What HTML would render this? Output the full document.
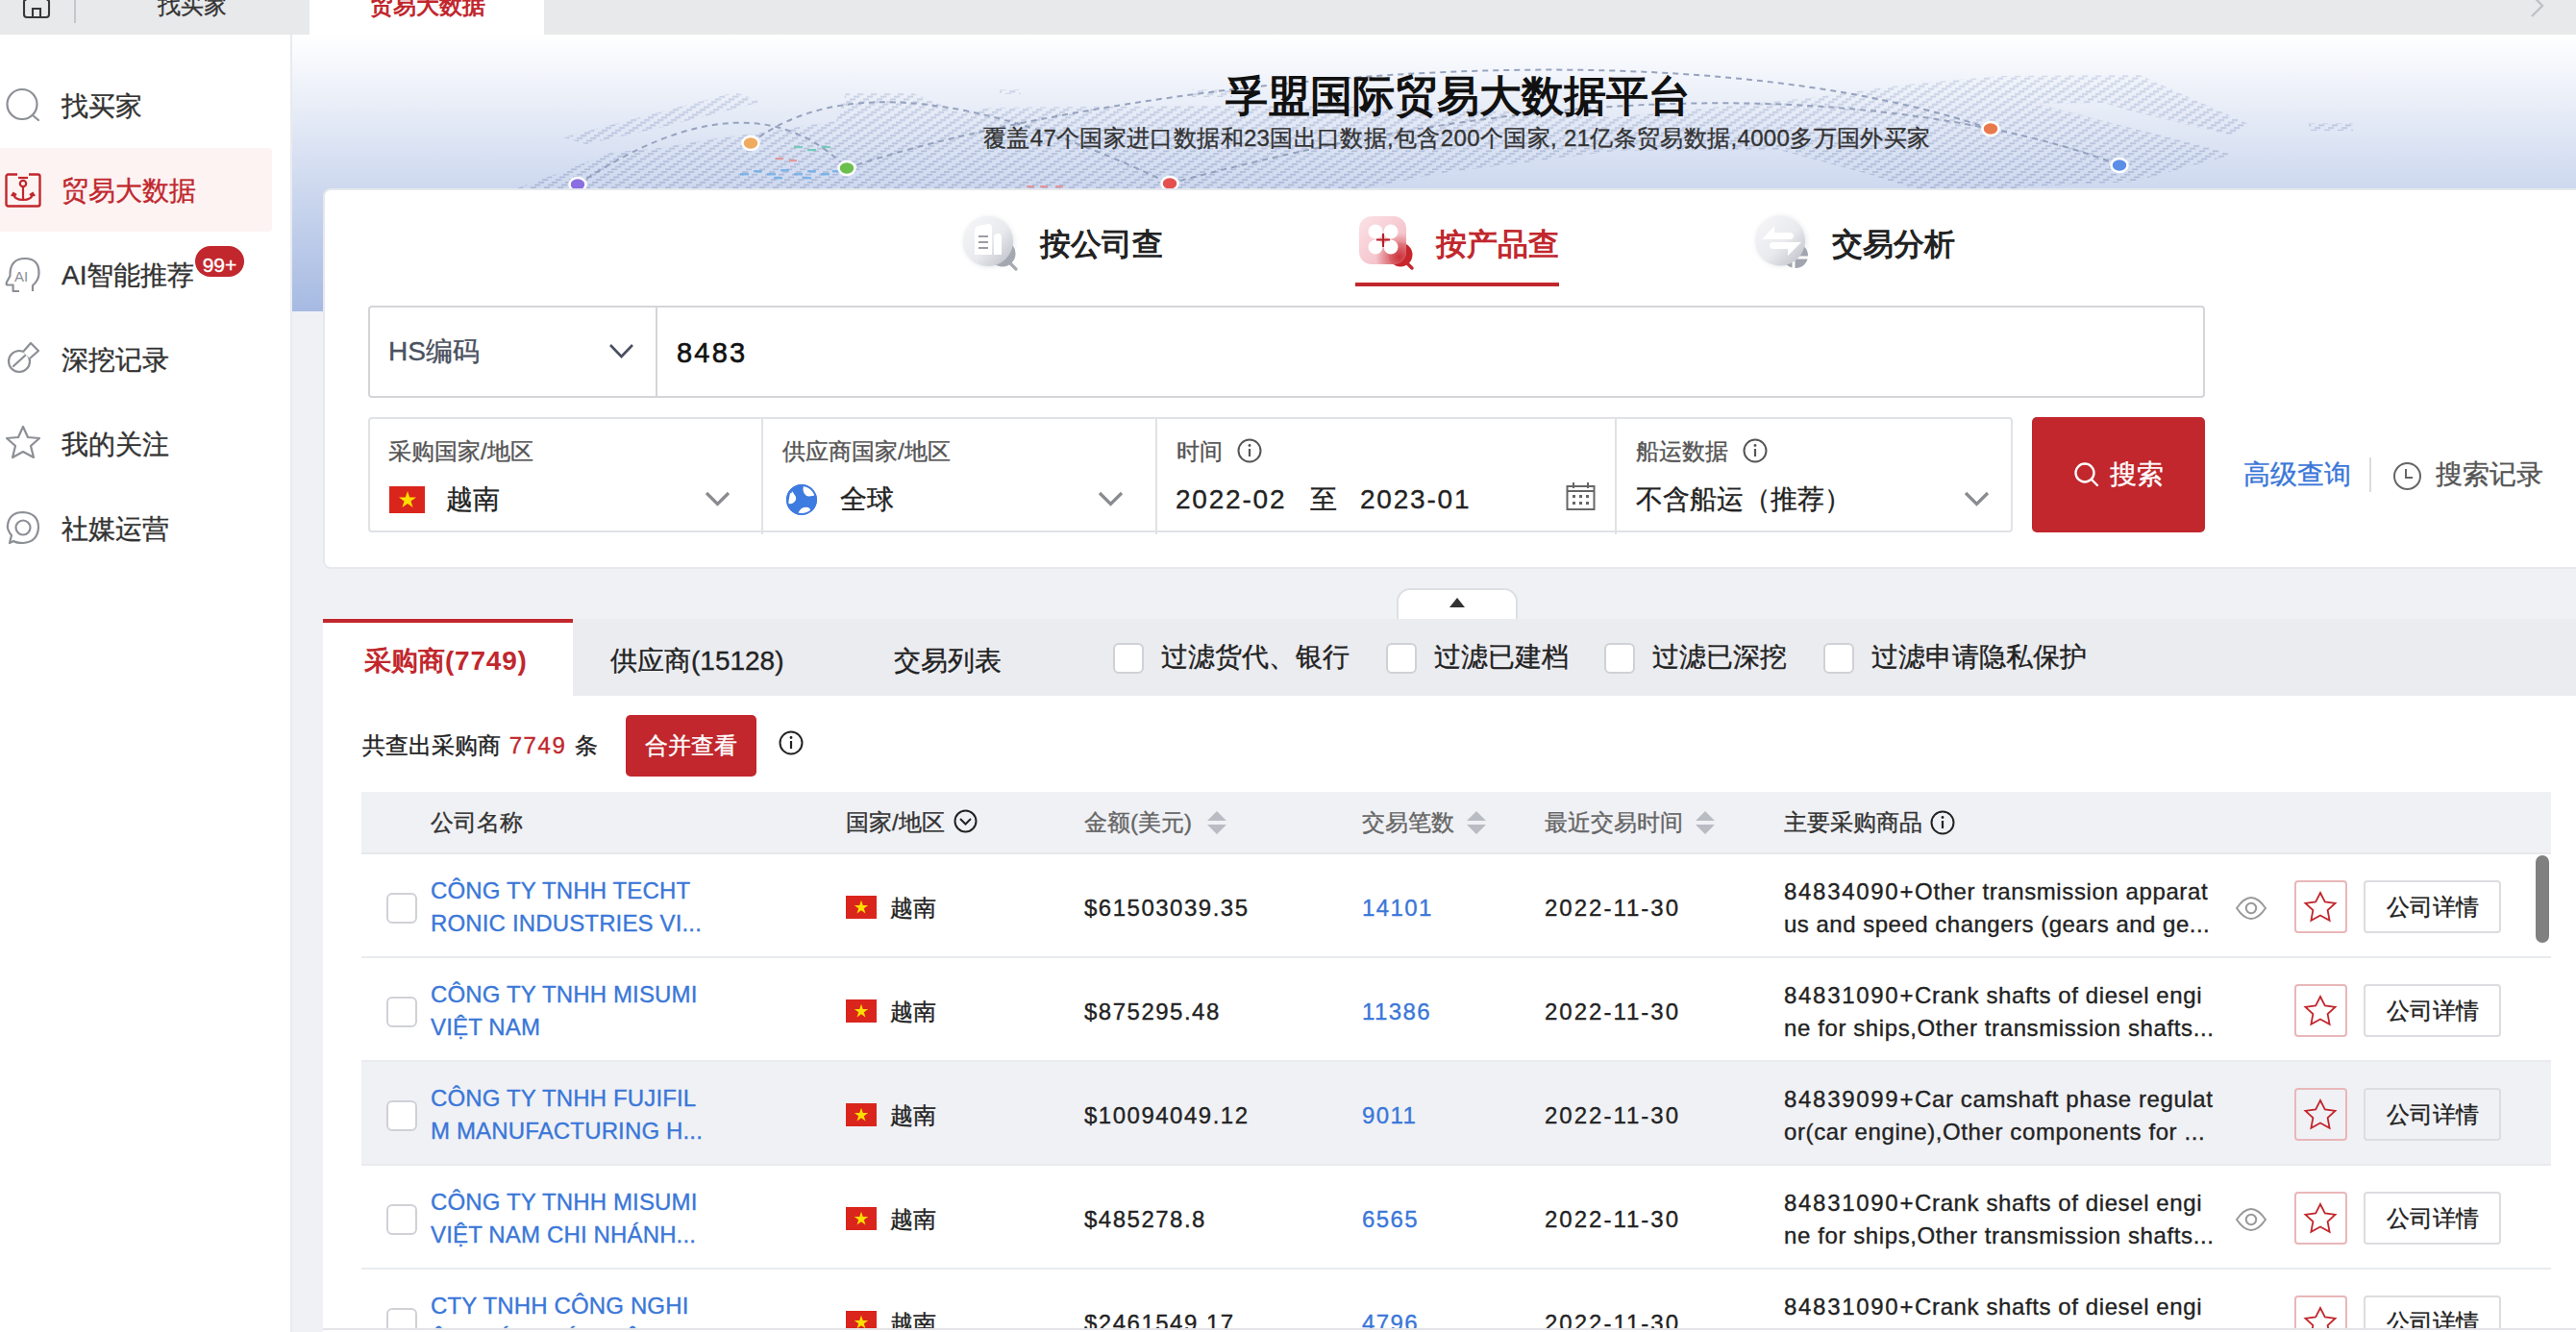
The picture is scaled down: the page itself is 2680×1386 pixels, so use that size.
<!DOCTYPE html>
<html><head><meta charset="utf-8">
<style>
*{box-sizing:border-box;margin:0;padding:0}
html,body{width:2680px;height:1386px;overflow:hidden}
body{-webkit-text-stroke:0.35px currentColor;position:relative;background:#f0f1f5;font-family:"Liberation Sans",sans-serif;color:#222}
.a{position:absolute}
.nw{white-space:nowrap}
#topbar{left:0;top:0;width:2680px;height:36px;background:#e8e9eb;z-index:2}
#sidebar{left:0;top:36px;width:304px;height:1350px;background:#fff;border-right:2px solid #e8eaee}
.nav{position:absolute;left:0;width:283px;height:87px}
.nav .t{position:absolute;left:64px;top:1px;line-height:87px;font-size:28px;color:#333;white-space:nowrap}
.nav svg{position:absolute;left:5px;top:25px}
#banner{left:304px;top:36px;width:2376px;height:288px;background:linear-gradient(#ffffff,#a6bae2);overflow:hidden}
#card{left:336px;top:196px;width:2360px;height:396px;background:#fff;border:2px solid #e6e8ee;border-radius:8px}
.red{color:#c1272d}
.blue{color:#3a77d8}
.lbl{font-size:24px;color:#555;line-height:30px}
.val{font-size:28px;color:#222;line-height:34px}
#results{left:336px;top:644px;width:2344px;height:738px;overflow:hidden;background:#fff}
#tabbar{left:0;top:0;width:2344px;height:80px;background:#ebecf0}
.cb{position:absolute;width:32px;height:32px;border:2px solid #cfd1d6;border-radius:6px;background:#fff}
.th{font-size:24px;color:#333;line-height:30px;top:17px}
.row{position:absolute;left:40px;width:2278px;height:108px;border-bottom:2px solid #e9ebef}
.row .cb{left:26px;top:40px}
.cn{position:absolute;left:72px;top:21px;letter-spacing:0.15px;font-size:24px;line-height:34px;color:#3a77d8;white-space:nowrap}
.flag{position:absolute;left:504px;top:43px;width:32px;height:24px;background:#da251d}
.flag svg{position:absolute;left:8px;top:4px}
.cty{position:absolute;top:39px !important;left:550px;top:37px;font-size:24px;line-height:34px}
.amt{position:absolute;top:39px !important;left:752px;top:37px;font-size:24px;line-height:34px;letter-spacing:1.5px}
.num{position:absolute;top:39px !important;left:1041px;top:37px;font-size:24px;line-height:34px;letter-spacing:1.4px;color:#3a77d8}
.dt{position:absolute;top:39px !important;left:1231px;top:37px;font-size:24px;line-height:34px;letter-spacing:2px}
.prod{position:absolute;left:1480px;top:22px;font-size:24px;line-height:34px;letter-spacing:0.6px;white-space:nowrap;color:#222}
.eye{position:absolute;left:1949px;top:42px}
.star{position:absolute;left:2011px;top:27px;width:55px;height:55px;border:2px solid #e9b7b9;border-radius:4px}
.star svg{position:absolute;left:7px;top:8px}
.det{position:absolute;left:2083px;top:27px;width:143px;height:55px;border:2px solid #dcdde0;border-radius:4px;font-size:24px;line-height:51px;text-align:center;color:#222}
</style></head><body>

<!-- top bar -->
<div id="topbar" class="a">
  <svg class="a" style="left:22px;top:-12px" width="32" height="32" viewBox="0 0 32 32"><path d="M3 13 L16 3 L29 13 V27 Q29 30 26 30 H6 Q3 30 3 27 Z" fill="none" stroke="#38383a" stroke-width="2.1" stroke-linejoin="round"/><path d="M12 30 V21 H20 V30" fill="none" stroke="#38383a" stroke-width="2.1"/></svg>
  <div class="a" style="left:77px;top:0;width:2px;height:24px;background:#c5c6c9"></div>
  <div class="a nw" style="left:164px;top:-9px;font-size:24px;line-height:30px;color:#333">找买家</div>
  <div class="a" style="left:322px;top:0;width:244px;height:36px;background:#fff"></div>
  <div class="a nw red" style="left:385px;top:-9px;font-size:24px;line-height:30px;font-weight:bold;-webkit-text-stroke:0">贸易大数据</div>
  <svg class="a" style="left:2630px;top:-6px" width="20" height="26" viewBox="0 0 20 26"><path d="M4 0.5 L15 12 L4 23" fill="none" stroke="#c0c1c4" stroke-width="2.4"/></svg>
</div>

<!-- sidebar -->
<div id="sidebar" class="a">
  <div class="nav" style="top:30px"><svg width="38" height="38" viewBox="0 0 38 38" style="top:25px;left:5px"><circle cx="18" cy="17.5" r="15.5" fill="none" stroke="#8c8f95" stroke-width="2.2"/><path d="M29 29 L35 34" stroke="#8c8f95" stroke-width="2.2" stroke-linecap="round"/></svg><span class="t">找买家</span></div>
  <div class="nav" style="top:118px;background:#fdf3f3;border-radius:0 4px 4px 0"><svg width="38" height="38" viewBox="0 0 38 38" style="top:26px;left:5px"><rect x="1.5" y="1.5" width="35" height="33" rx="2" fill="none" stroke="#c1272d" stroke-width="2.4"/><path d="M13 1.5 H25" stroke="#fdf3f3" stroke-width="3"/><path d="M14 5 H24" stroke="#c1272d" stroke-width="2.2"/><circle cx="19" cy="11" r="3.2" fill="none" stroke="#c1272d" stroke-width="2.2"/><path d="M19 14 V28 M9 22 Q10 28 19 28 Q28 28 29 22 M7 24 L9 21 L12 23 M31 24 L29 21 L26 23" fill="none" stroke="#c1272d" stroke-width="2.2"/></svg><span class="t" style="color:#c1272d">贸易大数据</span></div>
  <div class="nav" style="top:206px"><svg width="40" height="40" viewBox="0 0 40 40" style="top:23px;left:4px"><path d="M16 38 H9.6 V31.5 H3.5 Q2 31 3 28.5 L6.5 22 Q6 4 22 4 Q37 4 36.5 20 Q36 27 30 32 V38" fill="none" stroke="#8c8f95" stroke-width="2.2" stroke-linejoin="round"/><text x="11" y="27.5" font-size="15" font-family="Liberation Sans" fill="#8c8f95" style="-webkit-text-stroke:0">AI</text></svg><span class="t">AI智能推荐</span>
    <div class="a nw" style="left:203px;top:14px;width:51px;height:32px;border-radius:16px;background:#c1272d;color:#fff;font-size:21px;line-height:40px;text-align:center;overflow:hidden">99+</div></div>
  <div class="nav" style="top:294px"><svg width="40" height="40" viewBox="0 0 40 40" style="top:22px;left:4px"><circle cx="16" cy="24" r="11" fill="none" stroke="#8c8f95" stroke-width="2.2"/><path d="M20 14 L28 5 L36 13 L27 21" fill="#fff" stroke="#8c8f95" stroke-width="2.2" stroke-linejoin="round"/><path d="M10 29 L22 18" stroke="#8c8f95" stroke-width="2.2" stroke-linecap="round"/></svg><span class="t">深挖记录</span></div>
  <div class="nav" style="top:382px"><svg width="40" height="40" viewBox="0 0 40 40" style="top:23px;left:4px"><path d="M20 3 L25 14 L37 15 L28 23 L31 35 L20 29 L9 35 L12 23 L3 15 L15 14 Z" fill="none" stroke="#8c8f95" stroke-width="2.2" stroke-linejoin="round"/></svg><span class="t">我的关注</span></div>
  <div class="nav" style="top:470px"><svg width="40" height="40" viewBox="0 0 40 40" style="top:23px;left:4px"><path d="M6 36 L8 28 Q3 22 4 17 Q6 4 20 4 Q36 5 36 20 Q35 35 20 36 Q13 36 10 34 Z" fill="none" stroke="#8c8f95" stroke-width="2.2" stroke-linejoin="round"/><circle cx="20" cy="20" r="7.5" fill="none" stroke="#8c8f95" stroke-width="2.2"/></svg><span class="t">社媒运营</span></div>
</div>

<!-- banner -->
<div id="banner" class="a"></div>
<svg class="a" style="left:304px;top:36px" width="2376" height="288" viewBox="304 36 2376 288">
  <defs>
    <pattern id="dash" x="0" y="0" width="14" height="18.9" patternUnits="userSpaceOnUse"><g fill="#aab6d4"><rect x="0" y="0.0" width="6.2" height="1.6"/><rect x="10" y="2.7" width="6.2" height="1.6"/><rect x="-4" y="2.7" width="6.2" height="1.6"/><rect x="6" y="5.4" width="6.2" height="1.6"/><rect x="2" y="8.1" width="6.2" height="1.6"/><rect x="12" y="10.8" width="6.2" height="1.6"/><rect x="-2" y="10.8" width="6.2" height="1.6"/><rect x="8" y="13.5" width="6.2" height="1.6"/><rect x="-6" y="13.5" width="6.2" height="1.6"/><rect x="4" y="16.2" width="6.2" height="1.6"/></g></pattern>
    <linearGradient id="fade" x1="0" y1="0" x2="0" y2="1"><stop offset="0" stop-color="#fff" stop-opacity="0.55"/><stop offset="1" stop-color="#fff" stop-opacity="1"/></linearGradient>
    <mask id="fm" maskUnits="userSpaceOnUse" x="304" y="36" width="2376" height="288"><rect x="304" y="75" width="2376" height="125" fill="url(#fade)"/></mask>
  </defs>
  <g mask="url(#fm)">
    <path d="M527 200 L576 182 L635 159 L687 154 L737 145 L800 137 L870 126 L880 97 L950 97 L1000 118 L1030 112 L1280 110 L1500 112 L1680 122 L1882 102 L1983 88 L2080 79 L2226 78 L2339 129 L2321 141 L2212 114 L2189 107 L2120 108 L2204 130 L2297 153 L2322 161 L2220 189 L2111 194 L2090 200 L2000 200 L1944 181 L1851 156 L1680 157 L1500 180 L1400 200 Z" fill="url(#dash)"/>
    <path d="M586 143 L765 96 L792 106 L690 132 L610 150 Z" fill="url(#dash)"/>
    <path d="M1040 93 H1062 V98 H1040 Z M1240 93 H1282 V101 H1240 Z M2402 128 H2448 V136 H2402 Z" fill="url(#dash)"/>
  </g>
  <g fill="#5ec9b0" opacity="0.8"><rect x="826" y="152" width="9" height="2.2"/><rect x="840" y="155" width="9" height="2.2"/><rect x="855" y="152" width="9" height="2.2"/></g>
  <g fill="#e88a8a" opacity="0.8"><rect x="807" y="164" width="8" height="2.2"/><rect x="821" y="166" width="8" height="2.2"/><rect x="1068" y="193" width="8" height="2.2"/><rect x="1082" y="193" width="8" height="2.2"/><rect x="1098" y="193" width="8" height="2.2"/></g>
  <g fill="#6fb0ea" opacity="0.85"><rect x="770" y="180" width="9" height="2.4"/><rect x="784" y="177" width="9" height="2.4"/><rect x="798" y="180" width="9" height="2.4"/><rect x="812" y="176" width="9" height="2.4"/><rect x="826" y="180" width="9" height="2.4"/><rect x="840" y="177" width="9" height="2.4"/><rect x="854" y="180" width="9" height="2.4"/><rect x="866" y="177" width="9" height="2.4"/><rect x="805" y="184" width="9" height="2.4"/><rect x="835" y="184" width="9" height="2.4"/></g>
  <g fill="none" stroke="#8e9bb8" stroke-width="2" stroke-dasharray="6 5" opacity="0.9">
    <path d="M601 192 Q779 72.5 881 175"/>
    <path d="M781 149 Q914 46 1217 191"/>
    <path d="M881 175 C1100 100 1700 10 2071 134"/>
    <path d="M1217 191 Q1700 60 2071 134"/>
    <path d="M2071 134 Q2150 150 2205 172"/>
  </g>
  <g stroke="#fff" stroke-width="2.5">
    <ellipse cx="601" cy="192" rx="8.5" ry="7" fill="#8b6ee0"/>
    <ellipse cx="781" cy="149" rx="8.5" ry="7" fill="#eeaa5e"/>
    <ellipse cx="881" cy="175" rx="8.5" ry="7" fill="#6bbf4c"/>
    <ellipse cx="1217" cy="191" rx="8.5" ry="7" fill="#e4504f"/>
    <ellipse cx="2071" cy="134" rx="8.5" ry="7" fill="#e8794c"/>
    <ellipse cx="2205" cy="172" rx="8.5" ry="7" fill="#5b8ee6"/>
  </g>
</svg>
<div class="a nw" style="left:1275px;top:72px;font-size:44px;line-height:56px;font-weight:bold;-webkit-text-stroke:0;color:#111">孚盟国际贸易大数据平台</div>
<div class="a nw" style="left:1023px;top:129px;font-size:24px;line-height:30px;color:#333;letter-spacing:0.35px">覆盖47个国家进口数据和23国出口数据,包含200个国家, 21亿条贸易数据,4000多万国外买家</div>

<!-- card -->
<div id="card" class="a"></div>
<svg class="a" style="left:995px;top:218px" width="70" height="70" viewBox="995 218 70 70">
  <defs>
    <linearGradient id="g1" x1="0" y1="0" x2="1" y2="1"><stop offset="0" stop-color="#f7f7f9"/><stop offset="0.55" stop-color="#e9eaee"/><stop offset="1" stop-color="#b9bcc4"/></linearGradient>
    <filter id="sh" x="-30%" y="-30%" width="160%" height="160%"><feGaussianBlur stdDeviation="2"/></filter>
  </defs>
  <circle cx="1029" cy="252" r="27" fill="#d9dbe0" opacity="0.5" filter="url(#sh)"/>
  <path d="M1051 274 L1057 280" stroke="#a7aab1" stroke-width="3.2" stroke-linecap="round"/>
  <circle cx="1043" cy="264" r="13.5" fill="#a4a8b0"/>
  <circle cx="1028" cy="251" r="26" fill="url(#g1)"/>
  <path d="M1014 265 V240 Q1014 236 1018 235 L1028 233 Q1032 233 1032 237 V265 Z" fill="#fff"/>
  <path d="M1034 265 V247 Q1034 243 1038 243 Q1042 243 1042 247 V265 Z" fill="#fff"/>
  <path d="M1018 246 H1028 M1018 252 H1028 M1018 258 H1028" stroke="#9b9da3" stroke-width="2"/>
</svg>
<svg class="a" style="left:1405px;top:218px" width="70" height="70" viewBox="1405 218 70 70">
  <defs>
    <linearGradient id="g2" x1="0" y1="0" x2="1" y2="1"><stop offset="0" stop-color="#fbdfe4"/><stop offset="1" stop-color="#f0aeb8"/></linearGradient>
    <radialGradient id="g2r" cx="0.85" cy="0.85" r="0.5"><stop offset="0" stop-color="#c8252c" stop-opacity="0.9"/><stop offset="1" stop-color="#c8252c" stop-opacity="0"/></radialGradient>
  </defs>
  <path d="M1463 273 L1469 279" stroke="#c8252c" stroke-width="3.4" stroke-linecap="round"/>
  <circle cx="1457" cy="265" r="12.5" fill="#c8252c"/>
  <rect x="1414" y="225" width="49" height="50" rx="13" fill="url(#g2)" opacity="0.9"/>
  <rect x="1414" y="225" width="49" height="50" rx="13" fill="url(#g2r)"/>
  <circle cx="1431" cy="241" r="7.5" fill="#fff"/><circle cx="1447" cy="241" r="7.5" fill="#fff"/>
  <circle cx="1431" cy="257" r="7.5" fill="#fff"/><circle cx="1447" cy="257" r="7.5" fill="#fff"/>
  <path d="M1439 243 V257 M1432 249.5 H1446" stroke="#b3222a" stroke-width="2"/>
</svg>
<svg class="a" style="left:1820px;top:218px" width="70" height="70" viewBox="1820 218 70 70">
  <circle cx="1853" cy="251" r="27" fill="#d9dbe0" opacity="0.5" filter="url(#sh)"/>
  <circle cx="1868" cy="266" r="13" fill="#a1a5ad"/>
  <path d="M1866 250 V285 M1862 268 H1885" stroke="#fff" stroke-width="3"/>
  <circle cx="1852" cy="250.5" r="26" fill="url(#g1)"/>
  <path d="M1846 235 L1833 249 H1862 Q1866 249 1866 245.5 Q1866 242 1862 242 H1846 Z" fill="#fff"/>
  <path d="M1860 266 L1874 252 H1845 Q1841 252 1841 255.5 Q1841 259 1845 259 H1860 Z" fill="#fff"/>
</svg>
<div class="a nw" style="left:1082px;top:234px;font-size:32px;line-height:40px;font-weight:bold;-webkit-text-stroke:0;color:#222">按公司查</div>
<div class="a nw red" style="left:1494px;top:234px;font-size:32px;line-height:40px;font-weight:bold;-webkit-text-stroke:0">按产品查</div>
<div class="a" style="left:1410px;top:294px;width:212px;height:4px;background:#c1272d"></div>
<div class="a nw" style="left:1906px;top:234px;font-size:32px;line-height:40px;font-weight:bold;-webkit-text-stroke:0;color:#222">交易分析</div>

<!-- HS input -->
<div class="a" style="left:383px;top:318px;width:1911px;height:96px;border:2px solid #d4d5d8;border-radius:4px"></div>
<div class="a" style="left:682px;top:320px;width:2px;height:92px;background:#d4d5d8"></div>
<div class="a nw" style="left:404px;top:349px;font-size:28px;line-height:34px;color:#4a5060">HS编码</div>
<svg class="a" style="left:633px;top:356px" width="27" height="19" viewBox="0 0 27 19"><path d="M2 3 L13.5 15 L25 3" fill="none" stroke="#4a5060" stroke-width="2.6"/></svg>
<div class="a nw" style="left:704px;top:350px;font-size:29px;line-height:34px;color:#111;letter-spacing:2.2px;-webkit-text-stroke:0.6px #111">8483</div>

<!-- filters -->
<div class="a" style="left:383px;top:434px;width:1711px;height:120px;border:2px solid #e0e2e6;border-radius:4px"></div>
<div class="a" style="left:792px;top:436px;width:2px;height:120px;background:#e0e2e6"></div>
<div class="a" style="left:1202px;top:436px;width:2px;height:120px;background:#e0e2e6"></div>
<div class="a" style="left:1680px;top:436px;width:2px;height:120px;background:#e0e2e6"></div>

<div class="a nw lbl" style="left:404px;top:455px">采购国家/地区</div>
<div class="a" style="left:405px;top:506px;width:37px;height:28px;background:#da251d"><svg class="a" style="left:9px;top:4px" width="20" height="20" viewBox="0 0 20 20"><path d="M10 1 L12.2 7.5 L19 7.5 L13.5 11.5 L15.6 18 L10 14 L4.4 18 L6.5 11.5 L1 7.5 L7.8 7.5 Z" fill="#ffde00"/></svg></div>
<div class="a nw val" style="left:464px;top:503px">越南</div>
<svg class="a" style="left:733px;top:510px" width="27" height="19" viewBox="0 0 27 19"><path d="M2 3 L13.5 14.5 L25 3" fill="none" stroke="#8a8b90" stroke-width="3.2"/></svg>

<div class="a nw lbl" style="left:814px;top:455px">供应商国家/地区</div>
<svg class="a" style="left:817px;top:503px" width="34" height="34" viewBox="0 0 34 34"><circle cx="17" cy="17" r="15" fill="#3e7be0" stroke="#3e7be0" stroke-width="2"/><path d="M7 8 Q11 12 9 17 Q6 20 4 19 M20 3 Q18 9 22 13 Q27 14 31 12 M14 31 Q17 24 23 25 Q27 28 26 31" fill="#fff" stroke="none"/><path d="M5 10 Q12 11 11 17 Q9 22 3 21 Z M19 2.5 Q17 10 23 13 Q28 14 32 11 Q29 4 19 2.5 Z M13 32 Q16 23 24 25 Q28 28 27 31 Q20 34 13 32 Z" fill="#fff"/><circle cx="17" cy="17" r="15" fill="none" stroke="#3e7be0" stroke-width="2"/></svg>
<div class="a nw val" style="left:874px;top:503px">全球</div>
<svg class="a" style="left:1142px;top:510px" width="27" height="19" viewBox="0 0 27 19"><path d="M2 3 L13.5 14.5 L25 3" fill="none" stroke="#8a8b90" stroke-width="3.2"/></svg>

<div class="a nw lbl" style="left:1224px;top:455px">时间</div>
<svg class="a" style="left:1287px;top:456px" width="26" height="26" viewBox="0 0 26 26"><circle cx="13" cy="13" r="11.5" fill="none" stroke="#555" stroke-width="2"/><path d="M13 11 V19" stroke="#555" stroke-width="2.2"/><circle cx="13" cy="7.5" r="1.4" fill="#555"/></svg>
<div class="a nw val" style="left:1223px;top:503px;letter-spacing:1.8px">2022-02</div>
<div class="a nw val" style="left:1363px;top:503px">至</div>
<div class="a nw val" style="left:1415px;top:503px;letter-spacing:1.8px">2023-01</div>
<svg class="a" style="left:1629px;top:501px" width="31" height="31" viewBox="0 0 31 31"><rect x="1.5" y="5" width="28" height="24" fill="none" stroke="#666" stroke-width="2"/><path d="M1.5 10 H29.5 M8 1 V7 M23 1 V7" stroke="#666" stroke-width="2"/><g fill="#666"><rect x="7" y="14" width="3" height="3"/><rect x="14" y="14" width="3" height="3"/><rect x="21" y="14" width="3" height="3"/><rect x="7" y="21" width="3" height="3"/><rect x="14" y="21" width="3" height="3"/><rect x="21" y="21" width="3" height="3"/></g></svg>

<div class="a nw lbl" style="left:1702px;top:455px">船运数据</div>
<svg class="a" style="left:1813px;top:456px" width="26" height="26" viewBox="0 0 26 26"><circle cx="13" cy="13" r="11.5" fill="none" stroke="#555" stroke-width="2"/><path d="M13 11 V19" stroke="#555" stroke-width="2.2"/><circle cx="13" cy="7.5" r="1.4" fill="#555"/></svg>
<div class="a nw val" style="left:1702px;top:503px">不含船运（推荐）</div>
<svg class="a" style="left:2043px;top:510px" width="27" height="19" viewBox="0 0 27 19"><path d="M2 3 L13.5 14.5 L25 3" fill="none" stroke="#8a8b90" stroke-width="3.2"/></svg>

<div class="a" style="left:2114px;top:434px;width:180px;height:120px;background:#c1272d;border-radius:5px"></div>
<svg class="a" style="left:2157px;top:480px" width="28" height="28" viewBox="0 0 28 28"><circle cx="12" cy="12" r="9.5" fill="none" stroke="#fff" stroke-width="2.4"/><path d="M19 19 L25 25" stroke="#fff" stroke-width="2.4" stroke-linecap="round"/></svg>
<div class="a nw" style="left:2195px;top:477px;font-size:28px;line-height:34px;color:#fff;font-weight:500">搜索</div>

<div class="a nw blue" style="left:2334px;top:477px;font-size:28px;line-height:34px">高级查询</div>
<div class="a" style="left:2465px;top:476px;width:2px;height:36px;background:#dcdde0"></div>
<svg class="a" style="left:2489px;top:480px" width="31" height="31" viewBox="0 0 31 31"><circle cx="15.5" cy="15.5" r="13.5" fill="none" stroke="#666" stroke-width="2"/><path d="M14 8 V17 H21" fill="none" stroke="#666" stroke-width="2"/></svg>
<div class="a nw" style="left:2534px;top:477px;font-size:28px;line-height:34px;color:#555">搜索记录</div>

<!-- collapse tab -->
<div class="a" style="left:1453px;top:612px;width:126px;height:34px;background:#fff;border:2px solid #dcdfe4;border-radius:14px 14px 0 0"></div>
<svg class="a" style="left:1506px;top:620px" width="20" height="14" viewBox="0 0 20 14"><path d="M10 2 L18 12 H2 Z" fill="#333"/></svg>

<!-- results -->
<div id="results" class="a">
  <div id="tabbar" class="a"></div>
  <div class="a" style="left:0;top:0;width:260px;height:80px;background:#fff;border-top:4px solid #c1272d"></div>
  <div class="a nw red" style="left:43px;top:26px;font-size:28px;line-height:36px;font-weight:bold;-webkit-text-stroke:0">采购商<span style="letter-spacing:0.8px">(7749)</span></div>
  <div class="a nw" style="left:299px;top:26px;font-size:28px;line-height:36px;color:#222">供应商(15128)</div>
  <div class="a nw" style="left:594px;top:26px;font-size:28px;line-height:36px;color:#222">交易列表</div>
  <div class="cb" style="left:822px;top:25px"></div>
  <div class="a nw" style="left:872px;top:22px;font-size:28px;line-height:36px;color:#222">过滤货代、银行</div>
  <div class="cb" style="left:1106px;top:25px"></div>
  <div class="a nw" style="left:1156px;top:22px;font-size:28px;line-height:36px;color:#222">过滤已建档</div>
  <div class="cb" style="left:1333px;top:25px"></div>
  <div class="a nw" style="left:1383px;top:22px;font-size:28px;line-height:36px;color:#222">过滤已深挖</div>
  <div class="cb" style="left:1561px;top:25px"></div>
  <div class="a nw" style="left:1611px;top:22px;font-size:28px;line-height:36px;color:#222">过滤申请隐私保护</div>

  <div class="a nw" style="left:41px;top:117px;font-size:24px;line-height:30px;color:#222">共查出采购商 <span class="red" style="letter-spacing:1.6px;margin-left:2px">7749</span> <span style="margin-left:2px">条</span></div>
  <div class="a" style="left:315px;top:100px;width:136px;height:64px;background:#c1272d;border-radius:5px;color:#fff;font-size:24px;line-height:64px;text-align:center">合并查看</div>
  <svg class="a" style="left:474px;top:116px" width="26" height="26" viewBox="0 0 26 26"><circle cx="13" cy="13" r="11.5" fill="none" stroke="#222" stroke-width="2"/><path d="M13 11 V19" stroke="#222" stroke-width="2.2"/><circle cx="13" cy="7.5" r="1.4" fill="#222"/></svg>

  <!-- table header -->
  <div class="a" style="left:40px;top:180px;width:2278px;height:65px;background:#f0f1f5;border-bottom:2px solid #e6e8ec">
    <div class="a nw th" style="left:72px">公司名称</div>
    <div class="a nw th" style="left:504px">国家/地区</div>
    <svg class="a" style="left:616px;top:18px" width="25" height="25" viewBox="0 0 25 25"><circle cx="12.5" cy="12.5" r="11" fill="none" stroke="#222" stroke-width="2"/><path d="M7 10 L12.5 15.5 L18 10" fill="none" stroke="#222" stroke-width="2"/></svg>
    <div class="a nw th" style="left:752px;color:#666">金额(美元)</div>
    <svg class="a" style="left:878px;top:18px" width="24" height="28" viewBox="0 0 24 28"><path d="M12 2 L22 12 H2 Z M12 26 L22 16 H2 Z" fill="#b9bcc3"/></svg>
    <div class="a nw th" style="left:1041px;color:#666">交易笔数</div>
    <svg class="a" style="left:1148px;top:18px" width="24" height="28" viewBox="0 0 24 28"><path d="M12 2 L22 12 H2 Z M12 26 L22 16 H2 Z" fill="#b9bcc3"/></svg>
    <div class="a nw th" style="left:1231px;color:#666">最近交易时间</div>
    <svg class="a" style="left:1386px;top:18px" width="24" height="28" viewBox="0 0 24 28"><path d="M12 2 L22 12 H2 Z M12 26 L22 16 H2 Z" fill="#b9bcc3"/></svg>
    <div class="a nw th" style="left:1480px">主要采购商品</div>
    <svg class="a" style="left:1632px;top:19px" width="26" height="26" viewBox="0 0 26 26"><circle cx="13" cy="13" r="11.5" fill="none" stroke="#222" stroke-width="2"/><path d="M13 11 V19" stroke="#222" stroke-width="2.2"/><circle cx="13" cy="7.5" r="1.4" fill="#222"/></svg>
  </div>
  <div class="row" style="top:245px;">
    <div class="cb"></div>
    <div class="cn">CÔNG TY TNHH TECHT<br>RONIC INDUSTRIES VI...</div>
    <div class="flag"><svg width="16" height="16" viewBox="0 0 20 20"><path d="M10 1 L12.2 7.5 L19 7.5 L13.5 11.5 L15.6 18 L10 14 L4.4 18 L6.5 11.5 L1 7.5 L7.8 7.5 Z" fill="#ffde00"/></svg></div>
    <div class="cty">越南</div>
    <div class="amt">$61503039.35</div>
    <div class="num">14101</div>
    <div class="dt">2022-11-30</div>
    <div class="prod"><span style="letter-spacing:1.7px">84834090+</span>Other transmission apparat<br><span style="letter-spacing:0.5px">us and speed changers (gears and ge...</span></div>
    <div class="eye"><svg width="34" height="28" viewBox="0 0 34 28"><path d="M2 14 Q17 -8 32 14 Q17 36 2 14 Z" fill="none" stroke="#999" stroke-width="2" stroke-linejoin="round"/><circle cx="17" cy="14" r="5.2" fill="none" stroke="#999" stroke-width="2"/></svg></div>
    <div class="star"><svg width="36" height="36" viewBox="0 0 36 36"><path d="M18 3 L22.8 12.5 L33.5 13.8 L25.6 21 L27.6 31.8 L18 26.5 L8.4 31.8 L10.4 21 L2.5 13.8 L13.2 12.5 Z" fill="none" stroke="#c1272d" stroke-width="1.8" stroke-linejoin="miter"/></svg></div>
    <div class="det">公司详情</div>
  </div>
  <div class="row" style="top:353px;">
    <div class="cb"></div>
    <div class="cn">CÔNG TY TNHH MISUMI<br>VIỆT NAM</div>
    <div class="flag"><svg width="16" height="16" viewBox="0 0 20 20"><path d="M10 1 L12.2 7.5 L19 7.5 L13.5 11.5 L15.6 18 L10 14 L4.4 18 L6.5 11.5 L1 7.5 L7.8 7.5 Z" fill="#ffde00"/></svg></div>
    <div class="cty">越南</div>
    <div class="amt">$875295.48</div>
    <div class="num">11386</div>
    <div class="dt">2022-11-30</div>
    <div class="prod"><span style="letter-spacing:1.7px">84831090+</span>Crank shafts of diesel engi<br>ne for ships,Other transmission shafts...</div>
    
    <div class="star"><svg width="36" height="36" viewBox="0 0 36 36"><path d="M18 3 L22.8 12.5 L33.5 13.8 L25.6 21 L27.6 31.8 L18 26.5 L8.4 31.8 L10.4 21 L2.5 13.8 L13.2 12.5 Z" fill="none" stroke="#c1272d" stroke-width="1.8" stroke-linejoin="miter"/></svg></div>
    <div class="det">公司详情</div>
  </div>
  <div class="row" style="top:461px;background:#f0f1f5;">
    <div class="cb"></div>
    <div class="cn">CÔNG TY TNHH FUJIFIL<br>M MANUFACTURING H...</div>
    <div class="flag"><svg width="16" height="16" viewBox="0 0 20 20"><path d="M10 1 L12.2 7.5 L19 7.5 L13.5 11.5 L15.6 18 L10 14 L4.4 18 L6.5 11.5 L1 7.5 L7.8 7.5 Z" fill="#ffde00"/></svg></div>
    <div class="cty">越南</div>
    <div class="amt">$10094049.12</div>
    <div class="num">9011</div>
    <div class="dt">2022-11-30</div>
    <div class="prod"><span style="letter-spacing:1.7px">84839099+</span>Car camshaft phase regulat<br>or(car engine),Other components for ...</div>
    
    <div class="star"><svg width="36" height="36" viewBox="0 0 36 36"><path d="M18 3 L22.8 12.5 L33.5 13.8 L25.6 21 L27.6 31.8 L18 26.5 L8.4 31.8 L10.4 21 L2.5 13.8 L13.2 12.5 Z" fill="none" stroke="#c1272d" stroke-width="1.8" stroke-linejoin="miter"/></svg></div>
    <div class="det">公司详情</div>
  </div>
  <div class="row" style="top:569px;">
    <div class="cb"></div>
    <div class="cn">CÔNG TY TNHH MISUMI<br>VIỆT NAM CHI NHÁNH...</div>
    <div class="flag"><svg width="16" height="16" viewBox="0 0 20 20"><path d="M10 1 L12.2 7.5 L19 7.5 L13.5 11.5 L15.6 18 L10 14 L4.4 18 L6.5 11.5 L1 7.5 L7.8 7.5 Z" fill="#ffde00"/></svg></div>
    <div class="cty">越南</div>
    <div class="amt">$485278.8</div>
    <div class="num">6565</div>
    <div class="dt">2022-11-30</div>
    <div class="prod"><span style="letter-spacing:1.7px">84831090+</span>Crank shafts of diesel engi<br>ne for ships,Other transmission shafts...</div>
    <div class="eye"><svg width="34" height="28" viewBox="0 0 34 28"><path d="M2 14 Q17 -8 32 14 Q17 36 2 14 Z" fill="none" stroke="#999" stroke-width="2" stroke-linejoin="round"/><circle cx="17" cy="14" r="5.2" fill="none" stroke="#999" stroke-width="2"/></svg></div>
    <div class="star"><svg width="36" height="36" viewBox="0 0 36 36"><path d="M18 3 L22.8 12.5 L33.5 13.8 L25.6 21 L27.6 31.8 L18 26.5 L8.4 31.8 L10.4 21 L2.5 13.8 L13.2 12.5 Z" fill="none" stroke="#c1272d" stroke-width="1.8" stroke-linejoin="miter"/></svg></div>
    <div class="det">公司详情</div>
  </div>
  <div class="row" style="top:677px;">
    <div class="cb"></div>
    <div class="cn">CTY TNHH CÔNG NGHI<br>ỆP CHÍNH XÁC VIỆT NAM...</div>
    <div class="flag"><svg width="16" height="16" viewBox="0 0 20 20"><path d="M10 1 L12.2 7.5 L19 7.5 L13.5 11.5 L15.6 18 L10 14 L4.4 18 L6.5 11.5 L1 7.5 L7.8 7.5 Z" fill="#ffde00"/></svg></div>
    <div class="cty">越南</div>
    <div class="amt">$2461549.17</div>
    <div class="num">4796</div>
    <div class="dt">2022-11-30</div>
    <div class="prod"><span style="letter-spacing:1.7px">84831090+</span>Crank shafts of diesel engi<br>ne for ships,Other transmission shafts...</div>
    
    <div class="star"><svg width="36" height="36" viewBox="0 0 36 36"><path d="M18 3 L22.8 12.5 L33.5 13.8 L25.6 21 L27.6 31.8 L18 26.5 L8.4 31.8 L10.4 21 L2.5 13.8 L13.2 12.5 Z" fill="none" stroke="#c1272d" stroke-width="1.8" stroke-linejoin="miter"/></svg></div>
    <div class="det">公司详情</div>
  </div>
  <div class="a" style="left:2302px;top:246px;width:14px;height:91px;border-radius:7px;background:#808080"></div>
</div>

<div class="a" style="left:336px;top:1382px;width:2344px;height:2px;background:#e3e4e7"></div>
<div class="a" style="left:336px;top:1384px;width:2344px;height:2px;background:#fff"></div>
</body></html>
